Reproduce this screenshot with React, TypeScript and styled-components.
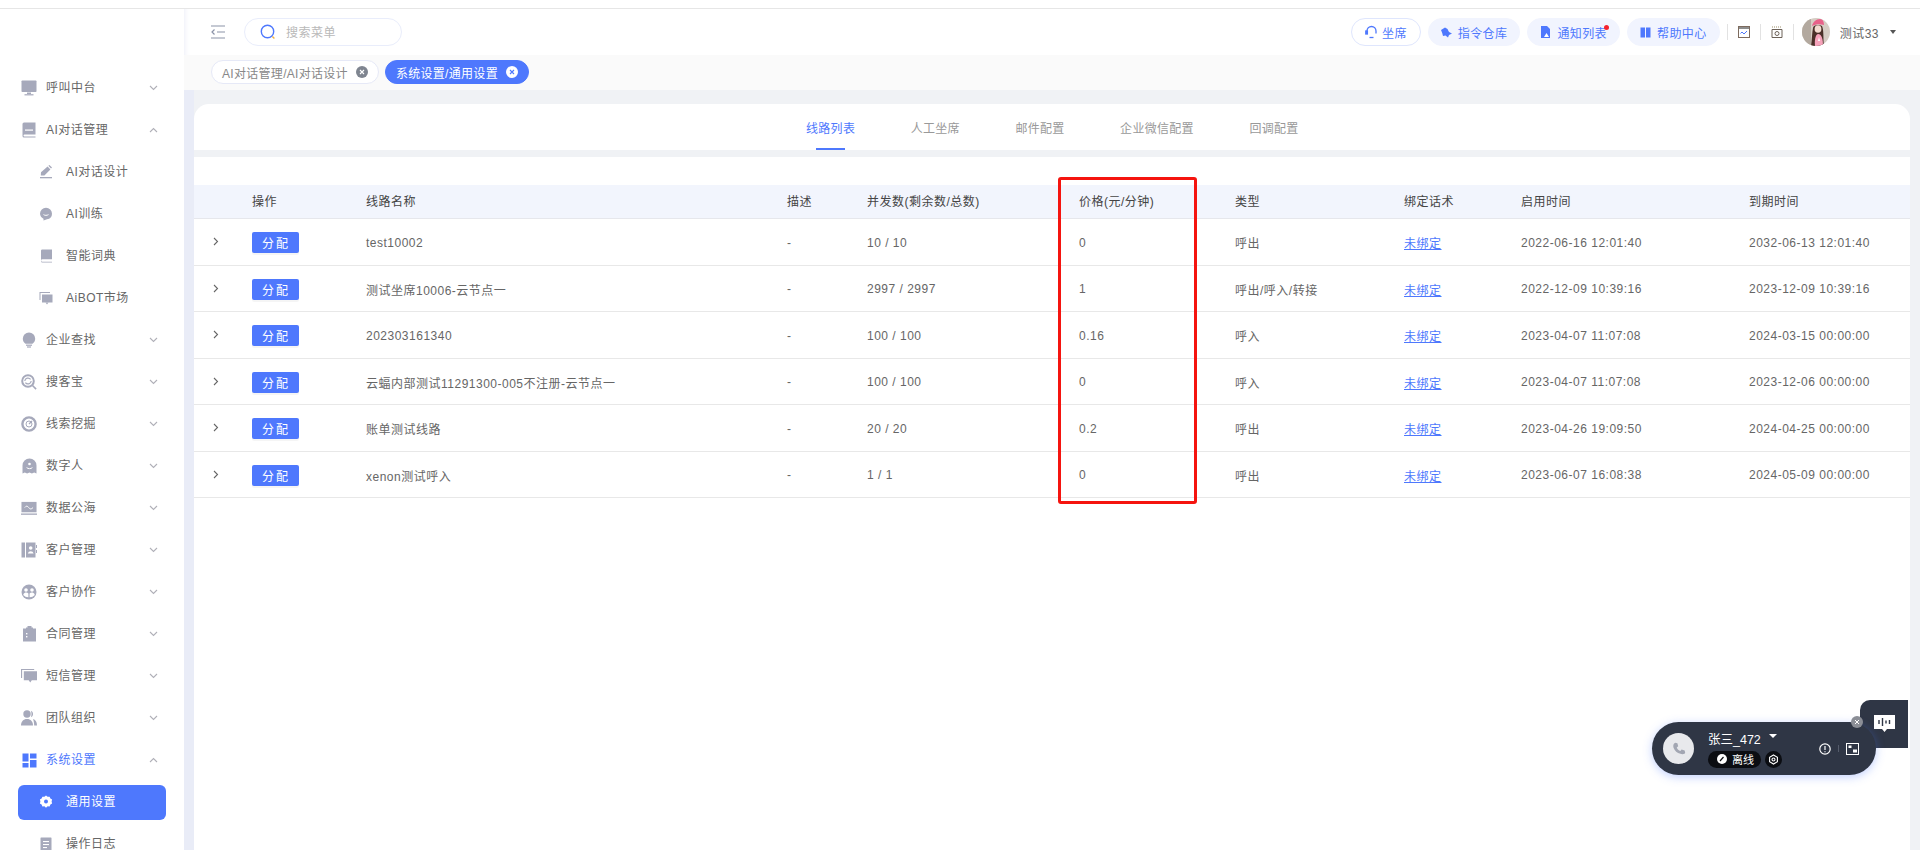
import React from 'react';
import styled, { createGlobalStyle } from 'styled-components';

const GlobalStyle = createGlobalStyle`
  html, body {
    margin: 0;
    padding: 0;
    height: 100%;
    overflow: hidden;
    background: #fff;
  }
  * {
    box-sizing: border-box;
  }
  body {
    font-family: "Liberation Sans", "Noto Sans CJK SC", sans-serif;
    font-size: 12px;
    letter-spacing: 0.5px;
    color: #666;
  }
`;

const Page = styled.div`
  position: relative;
  width: 1920px;
  height: 850px;
  overflow: hidden;
  display: flex;
  flex-direction: column;
`;

const TopStrip = styled.div`
  height: 9px;
  flex: none;
  background: #fff;
  border-bottom: 1px solid #e6e6e6;
`;

const Body = styled.div`
  flex: 1;
  min-height: 0;
  display: flex;
`;

const Sidebar = styled.aside`
  width: 184px;
  flex: none;
  padding-top: 58px;
  background: #fff;
  line-height: 16px;
`;

const MenuItem = styled.div<{ $selected?: boolean }>`
  height: 42px;
  padding: 0 26px 0 21px;
  display: flex;
  align-items: center;
  color: ${p => (p.$selected ? '#4e78fd' : '#666')};
`;

const MenuIcon = styled.span`
  width: 16px;
  height: 16px;
  flex: none;
  margin-right: 9px;
  display: flex;
  align-items: center;
  justify-content: center;
`;

const MenuLabel = styled.span`
  flex: 1;
  white-space: nowrap;
`;

const SubItem = styled.div<{ $active?: boolean }>`
  height: ${p => (p.$active ? '35px' : '42px')};
  margin: ${p => (p.$active ? '3.5px 18px' : '0')};
  padding-left: ${p => (p.$active ? '21px' : '39px')};
  border-radius: 6px;
  display: flex;
  align-items: center;
  background: ${p => (p.$active ? '#4e78fd' : 'transparent')};
  color: ${p => (p.$active ? '#fff' : '#666')};
`;

const SubIcon = styled.span`
  width: 14px;
  height: 14px;
  flex: none;
  margin-right: 13px;
  display: flex;
  align-items: center;
  justify-content: center;
`;

const Main = styled.main`
  flex: 1;
  min-width: 0;
  display: flex;
  flex-direction: column;
`;

const Header = styled.header`
  height: 46px;
  flex: none;
  padding: 9px 24px 9px 26px;
  display: flex;
  align-items: center;
  background: #fff;
  box-shadow: inset 6px 0 6px -6px #e6e9f5;
`;

const Toggle = styled.span`
  width: 16px;
  height: 14px;
  margin-right: 18px;
  display: flex;
`;

const SearchBox = styled.div`
  width: 158px;
  height: 28px;
  border: 1px solid #e9edfb;
  border-radius: 14px;
  padding: 0 0 2px 15px;
  display: flex;
  align-items: center;
  color: #b9b9b9;
`;

const SearchIcon = styled.span`
  width: 16px;
  height: 16px;
  margin: 2px 10px 0 0;
  display: flex;
`;

const HeaderRight = styled.div`
  margin-left: auto;
  display: flex;
  align-items: center;
`;

const PillButton = styled.div<{ $outline?: boolean }>`
  position: relative;
  height: 28px;
  margin-right: 7px;
  padding: 0 ${p => (p.$outline ? '13px' : '12px')};
  display: flex;
  align-items: center;
  gap: ${p => (p.$outline ? '4px' : '6px')};
  border-radius: 14px;
  letter-spacing: 0.4px;
  color: #4e78fd;
  background: ${p => (p.$outline ? '#fff' : '#f1f4fe')};
  border: 1px solid ${p => (p.$outline ? '#dfe6fd' : '#f1f4fe')};
`;

const RedDot = styled.i`
  position: absolute;
  top: 6px;
  right: 10px;
  width: 5px;
  height: 5px;
  border-radius: 50%;
  background: #f5222d;
`;

const Divider = styled.span`
  width: 1px;
  height: 16px;
  background: #e2e2e2;
`;

const ToolIcon = styled.span`
  width: 12px;
  height: 12px;
  margin: 0 10px;
  display: flex;
`;

const Avatar = styled.span`
  width: 28px;
  height: 28px;
  margin: 0 10px 0 8px;
  border-radius: 50%;
  overflow: hidden;
  display: flex;
`;

const UserName = styled.span`
  margin-right: 11px;
  color: #666;
`;

const Caret = styled.span`
  width: 0;
  height: 0;
  border-left: 3.5px solid transparent;
  border-right: 3.5px solid transparent;
  border-top: 4px solid #555;
`;

const TagBar = styled.div`
  height: 35px;
  flex: none;
  padding: 5px 0 0 27px;
  display: flex;
  gap: 6px;
  background: #fafafa;
`;

const Tag = styled.div<{ $active?: boolean }>`
  height: 24px;
  padding: 0 10px;
  border-radius: 12px;
  display: flex;
  align-items: center;
  gap: 8px;
  white-space: nowrap;
  letter-spacing: 0.3px;
  color: ${p => (p.$active ? '#fff' : '#888')};
  background: ${p => (p.$active ? '#4e78fd' : '#fff')};
  border: 1px solid ${p => (p.$active ? '#4e78fd' : '#e6e9f7')};
`;

const Content = styled.div`
  flex: 1;
  min-height: 0;
  padding: 14px 10px 0 0;
  background: #f0f2f5;
  border-left: 10px solid #e9ecf7;
  display: flex;
  flex-direction: column;
  gap: 7px;
`;

const TabsCard = styled.nav`
  height: 46px;
  flex: none;
  background: #fff;
  border-radius: 15px 15px 0 0;
  padding-left: 612px;
  display: flex;
`;

const TabItem = styled.div<{ $active?: boolean }>`
  position: relative;
  margin-right: 55.5px;
  padding-top: 15px;
  white-space: nowrap;
  letter-spacing: 0.3px;
  color: ${p => (p.$active ? '#4e78fd' : '#999')};

  ${p =>
    p.$active &&
    `
    &::after {
      content: '';
      position: absolute;
      left: 10px;
      right: 10px;
      bottom: 0;
      height: 2px;
      background: #4e78fd;
    }
  `}
`;

const TableCard = styled.section`
  flex: 1;
  min-height: 0;
  padding-top: 28px;
  background: #fff;
`;

const COLUMNS = '50px 114px 421px 80px 212px 156px 169px 117px 228px 169px';

const HeadRow = styled.div`
  height: 34px;
  padding-bottom: 2px;
  display: grid;
  grid-template-columns: ${COLUMNS};
  align-items: center;
  background: #f2f5fd;
  border-bottom: 1px solid #e6e7ec;
  color: #444;
`;

const Row = styled.div`
  height: 46.5px;
  padding-top: 2px;
  display: grid;
  grid-template-columns: ${COLUMNS};
  align-items: center;
  border-bottom: 1px solid #e8e8e8;
`;

const Cell = styled.div`
  padding-left: 8px;
  white-space: nowrap;
`;

const ExpandCell = styled.div`
  padding-left: 19px;
  display: flex;
  margin-top: -2px;
`;

const AssignButton = styled.button`
  width: 47px;
  height: 21px;
  padding: 0;
  border: 0;
  border-radius: 2px;
  background: #4e78fd;
  box-shadow: 0 2px 0 rgba(0, 0, 0, 0.04);
  color: #fff;
  font: inherit;
  letter-spacing: 2px;
  text-indent: 1px;
`;

const BindLink = styled.a`
  color: #4e78fd;
  text-decoration: underline;
`;

const Annotation = styled.div`
  position: absolute;
  left: 1058px;
  top: 177px;
  width: 139px;
  height: 327px;
  border: 3px solid #f5140f;
  border-radius: 3px;
  pointer-events: none;
`;

const PhoneBar = styled.div`
  position: absolute;
  left: 1652px;
  top: 722px;
  width: 224px;
  height: 53px;
  padding-left: 11px;
  border-radius: 27px;
  background: #2f3645;
  box-shadow: 0 2px 10px rgba(78, 120, 253, 0.35);
  display: flex;
  align-items: center;
  color: #fff;
`;

const PhoneAvatar = styled.span`
  width: 31px;
  height: 31px;
  margin-right: 14px;
  border-radius: 50%;
  background: #e8e9ec;
  display: flex;
  align-items: center;
  justify-content: center;
`;

const PhoneInfo = styled.div`
  display: flex;
  flex-direction: column;
  gap: 4px;
`;

const PhoneName = styled.div`
  display: flex;
  align-items: center;
  font-size: 12.5px;
  letter-spacing: 0;
  height: 17px;
`;

const PhoneCaret = styled.span`
  margin: -4px 0 0 8px;
  width: 0;
  height: 0;
  border-left: 4px solid transparent;
  border-right: 4px solid transparent;
  border-top: 4px solid #fff;
`;

const StatusRow = styled.div`
  display: flex;
  gap: 4px;
`;

const StatusPill = styled.span`
  width: 53px;
  height: 17px;
  padding-left: 9px;
  border-radius: 9px;
  background: #0b0d12;
  display: flex;
  align-items: center;
  gap: 5px;
  font-size: 11px;
  letter-spacing: 0;
`;

const GearDot = styled.span`
  width: 17px;
  height: 17px;
  border-radius: 50%;
  background: #0b0d12;
  display: flex;
  align-items: center;
  justify-content: center;
`;

const PhoneTools = styled.div`
  margin-left: auto;
  margin-right: 17px;
  display: flex;
  align-items: center;
  gap: 7px;
`;

const ToolDivider = styled.span`
  width: 1px;
  height: 7px;
  background: #555c6b;
`;

const CloseDot = styled.span`
  position: absolute;
  right: 13px;
  top: -6px;
  width: 12px;
  height: 12px;
  border-radius: 50%;
  background: #8b8e96;
  display: flex;
  align-items: center;
  justify-content: center;
`;

const ChatTab = styled.div`
  position: absolute;
  left: 1860px;
  top: 700px;
  width: 48px;
  height: 48px;
  padding-top: 15px;
  border-radius: 10px 0 0 0;
  background: #2f3645;
  display: flex;
  justify-content: center;
  align-items: flex-start;
`;

const GRAY = '#a6a9bb';

const Chevron = ({ up }: { up?: boolean }) => (
  <svg width="9" height="6" viewBox="0 0 9 6" fill="none" stroke="#b0b0b8" strokeWidth="1.1">
    <path d={up ? 'M1 5l3.5-3.5L8 5' : 'M1 1l3.5 3.5L8 1'} />
  </svg>
);

const icons: Record<string, React.ReactNode> = {
  monitor: (
    <svg width="16" height="16" viewBox="0 0 16 16" fill={GRAY}>
      <rect x="0.5" y="0.5" width="15" height="11.5" rx="0.8" />
      <rect x="6" y="12.5" width="4" height="1.6" />
      <rect x="3.5" y="14.2" width="9" height="1.2" />
    </svg>
  ),
  book: (
    <svg width="16" height="16" viewBox="0 0 16 16" fill={GRAY}>
      <path d="M1.500 2a1.500 1.500 0 0 1 1.500-1.500h11.500v12H3.500a1 1 0 0 0 0 2h11v1H3A1.500 1.500 0 0 1 1.500 14z" />
      <rect x="4" y="7.500" width="8" height="1.200" fill="#fff" />
    </svg>
  ),
  pen: (
    <svg width="14" height="14" viewBox="0 0 14 14" fill={GRAY}>
      <path d="M8.600 1.600l2.800 2.800-6 6H1.800l.2-3.200z" />
      <path d="M9.400.8l1-.8 2.600 2.600-1 1z" />
      <rect x="1" y="12" width="12" height="1.300" />
    </svg>
  ),
  chat: (
    <svg width="14" height="14" viewBox="0 0 14 14" fill={GRAY}>
      <path d="M7 .8a6 6 0 0 1 6 6 5.600 5.600 0 0 1-5 5.500L4.500 13.500v-1.800A5.800 5.800 0 0 1 1 6.800a6 6 0 0 1 6-6z" />
      <path d="M4.500 7.600c1.400 1 3.400 1 5 0" fill="none" stroke="#fff" strokeWidth="1" />
    </svg>
  ),
  dict: (
    <svg width="14" height="14" viewBox="0 0 14 14" fill={GRAY}>
      <path d="M2 1.500A1.200 1.200 0 0 1 3.200.5H13v9.700H3.400a1.300 1.300 0 0 0 0 2.600H13v.7H3.200A1.200 1.200 0 0 1 2 12.400z" />
    </svg>
  ),
  market: (
    <svg width="14" height="14" viewBox="0 0 14 14" fill={GRAY}>
      <path d="M.5 1h10.500v1H1.500v7h-1z" />
      <rect x="3" y="3.500" width="10.500" height="8" />
      <path d="M6.500 11.500h3L8 13.500z" />
    </svg>
  ),
  bulb: (
    <svg width="14" height="16" viewBox="0 0 14 16" fill={GRAY}>
      <path d="M7 .5a6.200 6.200 0 0 1 6.200 6.200c0 2.300-1.200 3.800-2.700 5H3.500C2 10.500.8 9 .8 6.700A6.200 6.200 0 0 1 7 .5z" />
      <rect x="4" y="12.600" width="6" height="1.200" />
      <rect x="5" y="14.400" width="4" height="1.200" />
    </svg>
  ),
  seek: (
    <svg width="16" height="16" viewBox="0 0 16 16" fill="none" stroke={GRAY}>
      <circle cx="7" cy="7" r="5.800" strokeWidth="2" />
      <path d="M11.500 11.500l3.600 3.600" strokeWidth="1.600" />
      <path d="M3.800 7a3.200 3.200 0 0 1 5.800-1.600M10.200 7a3.200 3.200 0 0 1-5.800 1.600" strokeWidth="1.200" />
    </svg>
  ),
  target: (
    <svg width="16" height="16" viewBox="0 0 16 16" fill="none" stroke={GRAY}>
      <circle cx="8" cy="8" r="6.600" strokeWidth="2.400" />
      <circle cx="8" cy="8" r="3" strokeWidth="1" />
      <path d="M8 8l3-3" strokeWidth="1.200" />
    </svg>
  ),
  ghost: (
    <svg width="15" height="16" viewBox="0 0 15 16" fill={GRAY}>
      <path d="M7.500.5a7 7 0 0 1 7 7v8l-2.300-1-2.300 1-2.400-1-2.400 1-2.300-1-2.300 1v-8a7 7 0 0 1 7-7z" />
      <circle cx="7.500" cy="6" r="1.300" fill="#fff" />
      <path d="M4.600 9.600c1.600 1.400 4.200 1.400 5.800 0" stroke="#fff" strokeWidth="1" fill="none" />
    </svg>
  ),
  sea: (
    <svg width="17" height="15" viewBox="0 0 17 15" fill={GRAY}>
      <rect x="0.5" y="0.5" width="16" height="11" />
      <rect y="12.800" width="17" height="1.400" />
      <path d="M4 6.500c1.500-2 2.800-2 4.200 0s2.800 2 4.600 0" stroke="#fff" strokeWidth="1" fill="none" />
    </svg>
  ),
  contact: (
    <svg width="16" height="16" viewBox="0 0 16 16" fill={GRAY}>
      <rect x="0.5" y="0.5" width="3.500" height="15" />
      <rect x="5" y="0.5" width="9.500" height="15" />
      <circle cx="9.700" cy="6" r="1.800" fill="#fff" />
      <path d="M6.800 11.500a3 3 0 0 1 5.800 0z" fill="#fff" />
      <rect x="15" y="3" width="1" height="3" />
      <rect x="15" y="8" width="1" height="3" />
    </svg>
  ),
  team: (
    <svg width="16" height="16" viewBox="0 0 16 16" fill={GRAY}>
      <circle cx="8" cy="8" r="7.500" />
      <circle cx="5" cy="6" r="1.800" fill="#fff" />
      <circle cx="11" cy="6" r="1.800" fill="#fff" />
      <path d="M2.200 11a3 3 0 0 1 5.200-1.600v3.800a7 7 0 0 1-5.200-2.200zM13.800 11a3 3 0 0 0-5.200-1.600v3.800a7 7 0 0 0 5.200-2.200z" fill="#fff" />
    </svg>
  ),
  clip: (
    <svg width="15" height="16" viewBox="0 0 15 16" fill={GRAY}>
      <path d="M1 2.500h3v-1h1.500V0h4v1.500H11v1h3v13H1z" />
      <rect x="4" y="7" width="1.400" height="1.400" fill="#fff" />
      <rect x="4" y="10" width="1.400" height="1.400" fill="#fff" />
    </svg>
  ),
  sms: (
    <svg width="17" height="16" viewBox="0 0 17 16" fill={GRAY}>
      <path d="M0 .5h14v1.100H1.200V10H0z" />
      <path d="M3 3h14v9.600h-5.500L9.800 15l-1.600-2.400H3z" />
    </svg>
  ),
  users: (
    <svg width="16" height="16" viewBox="0 0 16 16" fill={GRAY}>
      <circle cx="6" cy="4" r="3.700" />
      <path d="M0 15.500c0-4 2.400-6.500 6-6.500s6 2.500 6 6.500z" />
      <path d="M10 .8a3.500 3.500 0 0 1 0 6.400c-.2-.2.500-1.400.5-3.200S9.800 1 10 .8zM12 9c2.600.8 4 3 4 6.500h-2.800c0-2.600-.6-4.800-1.200-6.500z" />
    </svg>
  ),
  tiles: (
    <svg width="15" height="15" viewBox="0 0 15 15" fill="#4e78fd">
      <rect x="0.5" y="0.5" width="6" height="8" />
      <rect x="8" y="0.5" width="6.500" height="5" />
      <rect x="0.5" y="10" width="6" height="4.500" />
      <rect x="8" y="7" width="6.500" height="7.500" />
    </svg>
  ),
  gear: (
    <svg width="14" height="14" viewBox="0 0 14 14" fill="#fff">
      <path d="M7 .5l1.600 1.300 2-.1.800 1.800 1.700 1.100-.5 2 .5 1.900-1.700 1.100-.8 1.900-2-.2L7 12.700l-1.600-1.400-2 .2-.8-1.900L.9 8.500l.5-1.900-.5-2 1.700-1.100.8-1.800 2 .1z" />
      <circle cx="7" cy="6.600" r="2" fill="#4e78fd" />
    </svg>
  ),
  log: (
    <svg width="14" height="14" viewBox="0 0 14 14" fill={GRAY}>
      <rect x="1.500" y="0.5" width="11" height="13" rx="0.6" />
      <rect x="4" y="4" width="6" height="1.100" fill="#fff" />
      <rect x="4" y="7" width="6" height="1.100" fill="#fff" />
      <rect x="4" y="10" width="4" height="1.100" fill="#fff" />
    </svg>
  ),
};

const rows = [
  { name: 'test10002', load: '10 / 10', price: '0', type: '呼出', start: '2022-06-16 12:01:40', end: '2032-06-13 12:01:40' },
  { name: '测试坐席10006-云节点一', load: '2997 / 2997', price: '1', type: '呼出/呼入/转接', start: '2022-12-09 10:39:16', end: '2023-12-09 10:39:16' },
  { name: '202303161340', load: '100 / 100', price: '0.16', type: '呼入', start: '2023-04-07 11:07:08', end: '2024-03-15 00:00:00' },
  { name: '云蝠内部测试11291300-005不注册-云节点一', load: '100 / 100', price: '0', type: '呼入', start: '2023-04-07 11:07:08', end: '2023-12-06 00:00:00' },
  { name: '账单测试线路', load: '20 / 20', price: '0.2', type: '呼出', start: '2023-04-26 19:09:50', end: '2024-04-25 00:00:00' },
  { name: 'xenon测试呼入', load: '1 / 1', price: '0', type: '呼出', start: '2023-06-07 16:08:38', end: '2024-05-09 00:00:00' },
];

const headers = ['操作', '线路名称', '描述', '并发数(剩余数/总数)', '价格(元/分钟)', '类型', '绑定话术', '启用时间', '到期时间'];

const tabs = ['线路列表', '人工坐席', '邮件配置', '企业微信配置', '回调配置'];

const Menu = ({ icon, label, up, selected }: { icon: string; label: string; up?: boolean; selected?: boolean }) => (
  <MenuItem $selected={selected}>
    <MenuIcon>{icons[icon]}</MenuIcon>
    <MenuLabel>{label}</MenuLabel>
    <Chevron up={up} />
  </MenuItem>
);

const Sub = ({ icon, label, active }: { icon: string; label: string; active?: boolean }) => (
  <SubItem $active={active}>
    <SubIcon>{icons[icon]}</SubIcon>
    {label}
  </SubItem>
);

const TagClose = ({ bg, fg }: { bg: string; fg: string }) => (
  <svg width="12" height="12" viewBox="0 0 12 12">
    <circle cx="6" cy="6" r="6" fill={bg} />
    <path d="M4 4l4 4M8 4l-4 4" stroke={fg} strokeWidth="1.1" />
  </svg>
);

export default function App() {
  return (
    <Page>
      <GlobalStyle />
      <TopStrip />
      <Body>
        <Sidebar>
          <Menu icon="monitor" label="呼叫中台" />
          <Menu icon="book" label="AI对话管理" up />
          <Sub icon="pen" label="AI对话设计" />
          <Sub icon="chat" label="AI训练" />
          <Sub icon="dict" label="智能词典" />
          <Sub icon="market" label="AiBOT市场" />
          <Menu icon="bulb" label="企业查找" />
          <Menu icon="seek" label="搜客宝" />
          <Menu icon="target" label="线索挖掘" />
          <Menu icon="ghost" label="数字人" />
          <Menu icon="sea" label="数据公海" />
          <Menu icon="contact" label="客户管理" />
          <Menu icon="team" label="客户协作" />
          <Menu icon="clip" label="合同管理" />
          <Menu icon="sms" label="短信管理" />
          <Menu icon="users" label="团队组织" />
          <Menu icon="tiles" label="系统设置" up selected />
          <Sub icon="gear" label="通用设置" active />
          <Sub icon="log" label="操作日志" />
        </Sidebar>
        <Main>
          <Header>
            <Toggle>
              <svg width="16" height="14" viewBox="0 0 16 14" fill="none" stroke="#8b93a8" strokeWidth="1.2">
                <path d="M1 1h14M7 7h8M1 13h14M4.500 4.500L2 7l2.500 2.500" />
              </svg>
            </Toggle>
            <SearchBox>
              <SearchIcon>
                <svg width="16" height="16" viewBox="0 0 16 16" fill="none" stroke="#4e78fd" strokeWidth="1.4">
                  <circle cx="7.500" cy="7.500" r="6.200" />
                  <path d="M12.400 12.400l2 2" stroke="#f0b040" />
                </svg>
              </SearchIcon>
              搜索菜单
            </SearchBox>
            <HeaderRight>
              <PillButton $outline>
                <svg width="13" height="14" viewBox="0 0 13 14" fill="none" stroke="#4e78fd" strokeWidth="1.3">
                  <path d="M2 8.500V6a4.500 4.500 0 0 1 9 0v2.500" />
                  <rect x="0.8" y="6" width="1.600" height="3" fill="#4e78fd" />
                  <path d="M4.500 12.500h4" />
                </svg>
                坐席
              </PillButton>
              <PillButton>
                <svg width="11" height="11" viewBox="0 0 11 11" fill="#4e78fd">
                  <path d="M4 .5l2.500 1.500 1.500 3 3 1.500-3 1.500-1 2.500-2.500-2-2.500.5-.8-3L0 3z" />
                </svg>
                指令仓库
              </PillButton>
              <PillButton>
                <svg width="11" height="12" viewBox="0 0 11 12" fill="#4e78fd">
                  <path d="M1 0h6l3 3v9H1z" />
                  <path d="M4 11l2.500-4L9 11z" fill="#fff" />
                </svg>
                通知列表
                <RedDot />
              </PillButton>
              <PillButton>
                <svg width="11" height="11" viewBox="0 0 11 11" fill="#4e78fd">
                  <rect x="0.5" y="0.5" width="4.500" height="10" />
                  <rect x="6" y="0.5" width="4.500" height="10" />
                </svg>
                帮助中心
              </PillButton>
              <Divider />
              <ToolIcon>
                <svg width="12" height="12" viewBox="0 0 12 12" fill="none">
                  <rect x="0" y="0" width="12" height="3" fill="#8d8d8d" />
                  <rect x="0.5" y="0.5" width="11" height="11" stroke="#7d6b5e" />
                  <path d="M2.500 7.500l1.500-1.500 2 2 3-3" stroke="#4e78fd" />
                </svg>
              </ToolIcon>
              <Divider />
              <ToolIcon>
                <svg width="12" height="12" viewBox="0 0 12 12" fill="none" stroke="#6d6259" strokeWidth="1">
                  <path d="M1 3.500h10v8H1z" />
                  <circle cx="6" cy="7.500" r="2" />
                  <path d="M1 1h10" strokeDasharray="1 1" stroke="#9c8f6a" />
                </svg>
              </ToolIcon>
              <Divider />
              <Avatar>
                <svg width="28" height="28" viewBox="0 0 28 28">
                  <rect width="28" height="28" fill="#d6cdc4" />
                  <rect width="9" height="28" fill="#b3a99f" />
                  <path d="M11 10c0-3 6-4 9-2 2 4 1 12 2 20H9c1-7 1-13 2-18z" fill="#4b3029" />
                  <path d="M10 8c1-4 4-7 8-7 3 0 4 3 4 6-4-1-8-1-12 1z" fill="#e8628a" />
                  <ellipse cx="16" cy="11" rx="3.400" ry="3.800" fill="#f3dbd0" />
                  <path d="M13 28c-.5-5 0-11 3-12 4 0 5 6 5 12z" fill="#f6a3bb" />
                  <path d="M17 19l1 4h-2z" fill="#fff" />
                </svg>
              </Avatar>
              <UserName>测试33</UserName>
              <Caret />
            </HeaderRight>
          </Header>
          <TagBar>
            <Tag>
              AI对话管理/AI对话设计
              <TagClose bg="#7f8590" fg="#fff" />
            </Tag>
            <Tag $active>
              系统设置/通用设置
              <TagClose bg="#fff" fg="#4e78fd" />
            </Tag>
          </TagBar>
          <Content>
            <TabsCard>
              {tabs.map((t, i) => (
                <TabItem key={t} $active={i === 0}>
                  {t}
                </TabItem>
              ))}
            </TabsCard>
            <TableCard>
              <HeadRow>
                <span />
                {headers.map(h => (
                  <Cell key={h}>{h}</Cell>
                ))}
              </HeadRow>
              {rows.map(r => (
                <Row key={r.name}>
                  <ExpandCell>
                    <svg width="6" height="9" viewBox="0 0 6 9" fill="none" stroke="#666" strokeWidth="1.1">
                      <path d="M1 1l3.500 3.500L1 8" />
                    </svg>
                  </ExpandCell>
                  <Cell>
                    <AssignButton>分配</AssignButton>
                  </Cell>
                  <Cell>{r.name}</Cell>
                  <Cell>-</Cell>
                  <Cell>{r.load}</Cell>
                  <Cell>{r.price}</Cell>
                  <Cell>{r.type}</Cell>
                  <Cell>
                    <BindLink>未绑定</BindLink>
                  </Cell>
                  <Cell>{r.start}</Cell>
                  <Cell>{r.end}</Cell>
                </Row>
              ))}
            </TableCard>
          </Content>
        </Main>
      </Body>

      <Annotation />

      <ChatTab>
        <svg width="21" height="18" viewBox="0 0 21 18">
          <path d="M0 0h21v14h-8l-2.500 3L8 14H0z" fill="#fff" />
          <path d="M5 5v4M8.500 3v8M12 5.500v3M15.500 5v4" stroke="#2f3645" strokeWidth="1.4" />
        </svg>
      </ChatTab>
      <PhoneBar>
        <PhoneAvatar>
          <svg width="16" height="16" viewBox="0 0 24 24" fill="#a2a6b2">
            <path d="M6.600 2.500l3 .7 1.200 4.600-2.200 1.800c1 2.400 2.900 4.400 5.500 5.500l1.800-2.200 4.600 1.200.7 3c.1.800-.3 1.500-1 1.900-1.600.9-3.800 1-6 .2C9 18.300 5.700 15 4 10.600 3.200 8.400 3.300 6.200 4.200 4.600c.5-1.200 1.300-2 2.400-2.100z" />
          </svg>
        </PhoneAvatar>
        <PhoneInfo>
          <PhoneName>
            张三_472
            <PhoneCaret />
          </PhoneName>
          <StatusRow>
            <StatusPill>
              <svg width="10" height="10" viewBox="0 0 10 10">
                <circle cx="5" cy="5" r="5" fill="#fff" />
                <path d="M3 7l3.500-4" stroke="#0b0d12" strokeWidth="1.2" />
              </svg>
              离线
            </StatusPill>
            <GearDot>
              <svg width="11" height="11" viewBox="0 0 11 11" fill="none" stroke="#fff" strokeWidth="1.1">
                <path d="M5.500 1l3.900 2.250v4.500L5.500 10 1.600 7.750v-4.500z" />
                <circle cx="5.500" cy="5.500" r="1.500" />
              </svg>
            </GearDot>
          </StatusRow>
        </PhoneInfo>
        <PhoneTools>
          <svg width="12" height="12" viewBox="0 0 12 12" fill="none" stroke="#fff" strokeWidth="1.2">
            <circle cx="6" cy="6" r="5.200" />
            <path d="M6 3v4M6 8.200v1" />
          </svg>
          <ToolDivider />
          <svg width="13" height="12" viewBox="0 0 13 12" fill="none" stroke="#fff" strokeWidth="1">
            <rect x="0.5" y="0.5" width="12" height="11" />
            <rect x="2.500" y="2.500" width="3" height="2.500" fill="#fff" stroke="none" />
            <rect x="7" y="6.500" width="4" height="3" fill="#fff" stroke="none" />
          </svg>
        </PhoneTools>
        <CloseDot>
          <svg width="6" height="6" viewBox="0 0 6 6" stroke="#fff" strokeWidth="1">
            <path d="M1 1l4 4M5 1L1 5" />
          </svg>
        </CloseDot>
      </PhoneBar>
    </Page>
  );
}
